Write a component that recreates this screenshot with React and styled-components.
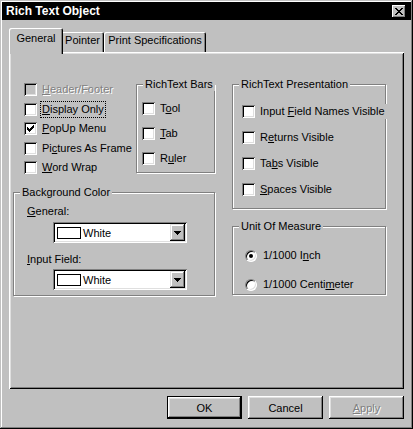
import React from 'react';
import styled, { createGlobalStyle } from 'styled-components';

const GlobalStyle = createGlobalStyle`
  * { box-sizing: border-box; }
  html, body { margin: 0; padding: 0; background: #c0c0c0; }
  body {
    font-family: "Liberation Sans", Arial, sans-serif;
    font-size: 11px;
    color: #000;
  }
`;

const Window = styled.div`
  width: 413px;
  height: 429px;
  padding: 2px;
  display: flex;
  flex-direction: column;
  background: #c0c0c0;
  box-shadow: inset -1px -1px #000, inset 1px 1px #c0c0c0,
    inset -2px -2px #808080, inset 2px 2px #fff;
`;

const TitleBar = styled.div`
  height: 18px;
  display: flex;
  align-items: center;
  justify-content: space-between;
  padding: 0 5px 0 4px;
  background: #000;
  color: #fff;
  font-weight: bold;
  font-size: 12px;
`;

const CloseButton = styled.div`
  width: 14px;
  height: 13px;
  display: flex;
  align-items: center;
  justify-content: center;
  background: #c0c0c0;
  box-shadow: inset -1px -1px #000, inset 1px 1px #fff, inset -2px -2px #808080;
`;

const Body = styled.div`
  display: flex;
  flex-direction: column;
  padding: 12px 7px 0 7px;
`;

const TabStrip = styled.div`
  display: flex;
  align-items: flex-end;
  height: 20px;
  padding-left: 2px;
`;

const Tab = styled.div`
  width: ${p => p.$width + (p.$active ? 4 : 0)}px;
  height: ${p => (p.$active ? 26 : 20)}px;
  margin: ${p => (p.$active ? '0 -2px -2px' : '0')};
  padding-top: ${p => (p.$active ? 4 : 2)}px;
  position: relative;
  z-index: ${p => (p.$active ? 2 : 1)};
  text-align: center;
  line-height: 13px;
  white-space: nowrap;
  background: #c0c0c0;
  border-radius: 2px 2px 0 0;
  box-shadow: inset 1px 1px #fff, inset -1px 0 #000, inset -2px 0 #808080;
`;

const Panel = styled.div`
  height: 337px;
  padding: 26px 0 0 4px;
  display: grid;
  grid-template-columns: 202px 154px;
  column-gap: 17px;
  align-items: start;
  background: #c0c0c0;
  box-shadow: inset 1px 1px #fff, inset -1px -1px #000,
    inset 2px 2px #dfdfdf, inset -2px -2px #808080;
`;

const Column = styled.div`
  display: flex;
  flex-direction: column;
`;

const TopArea = styled.div`
  display: flex;
  height: 95px;
`;

const CheckList = styled.div`
  display: flex;
  flex-direction: column;
  gap: 6.5px;
  padding-top: 5px;
  margin-left: 11px;
`;

const Group = styled.fieldset`
  margin: ${p => p.$mt || 0}px 0 0 ${p => (p.$push ? 'auto' : '0')};
  padding: 0;
  min-width: 0;
  width: ${p => p.$w}px;
  height: ${p => p.$h}px;
  border: 1px solid #808080;
  box-shadow: inset 1px 1px #fff, 1px 1px #fff;
`;

const Legend = styled.legend`
  margin-left: 6px;
  padding: 0 2px;
  line-height: 13px;
  white-space: nowrap;
  background: #c0c0c0;
`;

const GroupBody = styled.div`
  display: flex;
  flex-direction: column;
  align-items: flex-start;
  gap: ${p => p.$gap || 0}px;
  padding: ${p => p.$top}px 0 0 ${p => p.$left}px;
`;

const CheckRow = styled.div`
  display: flex;
  align-items: center;
  gap: 3px;
  height: 13px;
  ${p => p.$span && `
    width: ${p.$span}px;
    height: 15px;
    margin: -1px 0;
    background: #c0c0c0;
  `}
`;

const Box = styled.span`
  flex: none;
  width: 13px;
  height: 13px;
  display: flex;
  align-items: center;
  justify-content: center;
  background: ${p => (p.$disabled ? '#c0c0c0' : '#fff')};
  box-shadow: inset 1px 1px #808080, inset -1px -1px #fff,
    inset 2px 2px #000, inset -2px -2px #dfdfdf;
`;

const Radio = styled.span`
  flex: none;
  width: 12px;
  height: 12px;
  border-radius: 50%;
  display: flex;
  align-items: center;
  justify-content: center;
  background: #fff;
  border: 1px solid;
  border-color: #808080 #fff #fff #808080;
  box-shadow: inset 1px 1px #000, inset -1px -1px #dfdfdf;

  &::after {
    content: '';
    width: 4px;
    height: 4px;
    border-radius: 50%;
    background: ${p => (p.$on ? '#000' : 'transparent')};
  }
`;

const Label = styled.span`
  margin: -2px 0 -2px ${p => p.$indent || 0}px;
  padding: 1px;
  border: 1px dotted ${p => (p.$focused ? '#000' : 'transparent')};
  line-height: 13px;
  white-space: nowrap;
  color: ${p => (p.$disabled ? '#808080' : '#000')};
  text-shadow: ${p => (p.$disabled ? '1px 1px #fff' : 'none')};
`;

const FieldLabel = styled.div`
  line-height: 13px;
  margin-top: ${p => p.$mt}px;
`;

const Combo = styled.div`
  width: 134px;
  height: 21px;
  margin: ${p => p.$mt}px 0 0 26px;
  padding: 2px;
  display: flex;
  align-items: center;
  background: #fff;
  box-shadow: inset 1px 1px #808080, inset -1px -1px #fff,
    inset 2px 2px #000, inset -2px -2px #dfdfdf;
`;

const Swatch = styled.span`
  width: 24px;
  height: 12px;
  margin: 0 2px;
  border: 1px solid #000;
  background: ${p => p.$color};
`;

const DropButton = styled.span`
  margin-left: auto;
  width: 15px;
  height: 17px;
  display: flex;
  align-items: center;
  justify-content: center;
  background: #c0c0c0;
  box-shadow: inset -1px -1px #000, inset 1px 1px #dfdfdf,
    inset -2px -2px #808080, inset 2px 2px #fff;
`;

const ButtonRow = styled.div`
  display: flex;
  justify-content: flex-end;
  gap: 6px;
  margin-top: 7px;
`;

const Button = styled.button`
  width: 75px;
  height: 23px;
  padding: 0;
  border: none;
  font: inherit;
  background: #c0c0c0;
  color: ${p => (p.disabled ? '#808080' : '#000')};
  text-shadow: ${p => (p.disabled ? '1px 1px #fff' : 'none')};
  box-shadow: ${p =>
    p.$default
      ? 'inset 0 0 0 1px #000, inset -2px -2px #000, inset 2px 2px #fff, inset -3px -3px #808080, inset 3px 3px #dfdfdf'
      : 'inset -1px -1px #000, inset 1px 1px #fff, inset -2px -2px #808080, inset 2px 2px #dfdfdf'};
`;

const CloseGlyph = () => (
  <svg width="8" height="7" viewBox="0 0 8 7" shapeRendering="crispEdges">
    <path
      fill="#000"
      d="M0 0h2v1H0zM6 0h2v1H6zM1 1h2v1H1zM5 1h2v1H5zM2 2h4v1H2zM3 3h2v1H3zM2 4h4v1H2zM1 5h2v1H1zM5 5h2v1H5zM0 6h2v1H0zM6 6h2v1H6z"
    />
  </svg>
);

const Tick = () => (
  <svg width="7" height="7" viewBox="0 0 7 7" shapeRendering="crispEdges">
    <path
      fill="#000"
      d="M6 0h1v1H6zM5 1h2v1H5zM0 2h1v1H0zM4 2h3v1H4zM0 3h2v1H0zM3 3h3v1H3zM0 4h5v1H0zM1 5h3v1H1zM2 6h1v1H2z"
    />
  </svg>
);

const DownArrow = () => (
  <svg width="7" height="4" viewBox="0 0 7 4" shapeRendering="crispEdges">
    <path fill="#000" d="M0 0h7v1H0zM1 1h5v1H1zM2 2h3v1H2zM3 3h1v1H3z" />
  </svg>
);

// text with its keyboard accelerator underlined
const Accel = ({ text, at }) =>
  at == null ? text : (
    <>
      {text.slice(0, at)}
      <u>{text[at]}</u>
      {text.slice(at + 1)}
    </>
  );

const Check = ({ text, at, checked, disabled, focused, span }) => (
  <CheckRow $span={span}>
    <Box $disabled={disabled}>{checked && <Tick />}</Box>
    <Label $disabled={disabled} $focused={focused}>
      <Accel text={text} at={at} />
    </Label>
  </CheckRow>
);

const Option = ({ text, at, on }) => (
  <CheckRow>
    <Radio $on={on} />
    <Label $indent={1}>
      <Accel text={text} at={at} />
    </Label>
  </CheckRow>
);

const ColorCombo = ({ mt, color, name }) => (
  <Combo $mt={mt}>
    <Swatch $color={color} />
    <span>{name}</span>
    <DropButton>
      <DownArrow />
    </DropButton>
  </Combo>
);

const options = [
  { text: 'Header/Footer', at: 0, disabled: true },
  { text: 'Display Only', at: 0, focused: true },
  { text: 'PopUp Menu', at: 0, checked: true },
  { text: 'Pictures As Frame', at: 2 },
  { text: 'Word Wrap', at: 0 },
];

const bars = [
  { text: 'Tool', at: 1 },
  { text: 'Tab', at: 0 },
  { text: 'Ruler', at: 1 },
];

const presentation = [
  { text: 'Input Field Names Visible', at: 6, span: 146 },
  { text: 'Returns Visible', at: 1 },
  { text: 'Tabs Visible', at: 2 },
  { text: 'Spaces Visible', at: 0 },
];

const tabs = [
  { label: 'General', width: 50, active: true },
  { label: 'Pointer', width: 43 },
  { label: 'Print Specifications', width: 102 },
];

export default function App() {
  return (
    <>
      <GlobalStyle />
      <Window>
        <TitleBar>
          <span>Rich Text Object</span>
          <CloseButton>
            <CloseGlyph />
          </CloseButton>
        </TitleBar>
        <Body>
          <TabStrip>
            {tabs.map(t => (
              <Tab key={t.label} $width={t.width} $active={t.active}>
                {t.label}
              </Tab>
            ))}
          </TabStrip>
          <Panel>
            <Column>
              <TopArea>
                <CheckList>
                  {options.map(o => (
                    <Check key={o.text} {...o} />
                  ))}
                </CheckList>
                <Group $w={79} $h={95} $push>
                  <Legend>RichText Bars</Legend>
                  <GroupBody $top={11} $left={5} $gap={12}>
                    {bars.map(o => (
                      <Check key={o.text} {...o} />
                    ))}
                  </GroupBody>
                </Group>
              </TopArea>
              <Group $w={202} $h={110} $mt={13}>
                <Legend>Background Color</Legend>
                <GroupBody $top={6} $left={13}>
                  <FieldLabel $mt={0}>
                    <Accel text="General:" at={0} />
                  </FieldLabel>
                  <ColorCombo mt={4} color="#fff" name="White" />
                  <FieldLabel $mt={10}>
                    <Accel text="Input Field:" at={0} />
                  </FieldLabel>
                  <ColorCombo mt={3} color="#fff" name="White" />
                </GroupBody>
              </Group>
            </Column>
            <Column>
              <Group $w={154} $h={131}>
                <Legend>RichText Presentation</Legend>
                <GroupBody $top={14} $left={9} $gap={13}>
                  {presentation.map(o => (
                    <Check key={o.text} {...o} />
                  ))}
                </GroupBody>
              </Group>
              <Group $w={154} $h={75} $mt={11}>
                <Legend>Unit Of Measure</Legend>
                <GroupBody $top={16} $left={12} $gap={16}>
                  <Option text="1/1000 Inch" at={8} on />
                  <Option text="1/1000 Centimeter" at={12} />
                </GroupBody>
              </Group>
            </Column>
          </Panel>
          <ButtonRow>
            <Button $default>OK</Button>
            <Button>Cancel</Button>
            <Button disabled>
              <Accel text="Apply" at={0} />
            </Button>
          </ButtonRow>
        </Body>
      </Window>
    </>
  );
}
